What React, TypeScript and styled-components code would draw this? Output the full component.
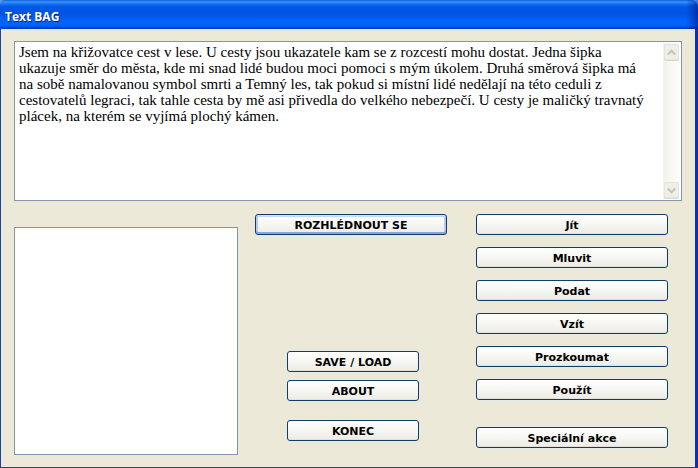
import React from "react";
import styled, { createGlobalStyle } from "styled-components";

const GlobalStyle = createGlobalStyle`
  * { box-sizing: border-box; }
  html, body { margin: 0; padding: 0; background: #ece9d8; }
`;

const Window = styled.div`
  display: flex;
  flex-direction: column;
  min-height: 100vh;
  background: linear-gradient(90deg, #5b93ee, #3a7bea);
`;

const TitleBar = styled.header`
  display: flex;
  align-items: center;
  height: 29px;
  padding: 5px 5px 0;
  border-radius: 5px 7px 0 0;
  background:
    linear-gradient(90deg, transparent calc(100% - 12px), rgba(0, 24, 130, 0.6)),
    linear-gradient(180deg, #0a5fd8 0, #3c94ff 2px, #1470f5 4px, #0058e6 7px, #0054e3 14px, #0062fa 20px, #0066ff 25px, #0050da 27px, #0038b8 29px);
`;

const Title = styled.h1`
  margin: 0;
  color: #fff;
  font: bold 12px/16px "Open Sans", "Noto Sans", sans-serif;
  text-shadow: 1px 1px 0 #0f1f8a;
`;

const Body = styled.main`
  flex: 1;
  display: flex;
  flex-direction: column;
  gap: 13px;
  padding: 12px 13px 12px;
  border: solid #1d4496;
  border-width: 0 3px 1px 1px;
  border-right-color: #0831b4;
  background: #ece9d8;
`;

const StoryFrame = styled.section`
  display: flex;
  height: 160px;
  border: 1px solid #8296a8;
  background: #fff;
`;

const Story = styled.textarea`
  flex: 1;
  min-width: 0;
  margin: 0;
  padding: 2px 0 0 4px;
  border: 0;
  outline: 0;
  resize: none;
  overflow: hidden;
  white-space: pre;
  background: transparent;
  color: #000;
  font: 15px/16px "Liberation Serif", serif;
`;

const ScrollTrack = styled.div`
  display: flex;
  flex-direction: column;
  justify-content: space-between;
  align-items: center;
  width: 17px;
  margin: 1px;
  padding: 1px 0;
  background: linear-gradient(90deg, #f1f1ec, #fdfdfa);
`;

const ScrollButton = styled.button`
  display: flex;
  align-items: center;
  justify-content: center;
  width: 15px;
  height: 16px;
  padding: 0;
  border: 1px solid #e6e5dc;
  border-radius: 2px;
  background: #efeee7;
  box-shadow: 0 1px 0 #d9d9d2;
`;

const Lower = styled.div`
  flex: 1;
  display: flex;
  padding-right: 14px;
`;

const Items = styled.div`
  flex: 7 1 0;
  display: flex;
  margin: 13px 17px 0 0;
`;

const ItemList = styled.select`
  flex: 1;
  width: 100%;
  min-height: 228px;
  margin: 0;
  padding: 0;
  border: 1px solid #8296a8;
  border-radius: 0;
  outline: 0;
  background: #fff;
`;

const Center = styled.div`
  flex: 6 1 0;
  display: flex;
  flex-direction: column;
  justify-content: space-between;
  padding-bottom: 14px;
`;

const SystemMenu = styled.nav`
  display: flex;
  flex-direction: column;
  gap: 8px;
  padding: 0 28px 0 32px;
`;

const Actions = styled.nav`
  flex: 6 1 0;
  display: flex;
  flex-direction: column;
  gap: 12px;
  margin-left: 29px;
`;

const PushButton = styled.button<{ $focused?: boolean; $spaceAbove?: number }>`
  width: 100%;
  height: 21px;
  margin: ${(p) => p.$spaceAbove ?? 0}px 0 0;
  padding: 2px 0 0;
  border: 1px solid #123c66;
  border-radius: 3px;
  outline: 0;
  background: linear-gradient(180deg, #ffffff 0%, #f6f6f2 50%, #ecebe5 100%);
  box-shadow: ${(p) =>
    p.$focused
      ? "inset 0 1px 0 #cee0fb, inset 0 -2px 0 #86a6ea, inset 2px 0 0 #b5cbf5, inset -2px 0 0 #b5cbf5, inset 0 2px 0 #c3dafb"
      : "inset 0 -1px 0 #e2e0d8, 0 0 0 1px rgba(220, 236, 236, 0.6)"};
  color: #000;
  font: bold 11px/17px "DejaVu Sans", Verdana, sans-serif;
`;

const storyText = [
  "Jsem na křižovatce cest v lese. U cesty jsou ukazatele kam se z rozcestí mohu dostat. Jedna šipka",
  "ukazuje směr do města, kde mi snad lidé budou moci pomoci s mým úkolem. Druhá směrová šipka má",
  "na sobě namalovanou symbol smrti a Temný les, tak pokud si místní lidé nedělají na této ceduli z",
  "cestovatelů legraci, tak tahle cesta by mě asi přivedla do velkého nebezpečí. U cesty je maličký travnatý",
  "plácek, na kterém se vyjímá plochý kámen.",
].join("\n");

const actions = ["Jít", "Mluvit", "Podat", "Vzít", "Prozkoumat", "Použít"];

function Chevron({ up }: { up?: boolean }) {
  return (
    <svg width="9" height="7" viewBox="0 0 9 7" fill="none" aria-hidden="true">
      <path d={up ? "M.7 5.5 4.5 1.7 8.3 5.5" : "M.7 1.5 4.5 5.3 8.3 1.5"} stroke="#c5c4bb" strokeWidth="2.2" />
    </svg>
  );
}

export default function App() {
  return (
    <>
      <GlobalStyle />
      <Window>
        <TitleBar>
          <Title>Text BAG</Title>
        </TitleBar>
        <Body>
          <StoryFrame>
            <Story aria-label="Text BAG" readOnly spellCheck={false} value={storyText} />
            <ScrollTrack>
              <ScrollButton type="button" aria-label="Nahoru" disabled>
                <Chevron up />
              </ScrollButton>
              <ScrollButton type="button" aria-label="Dolů" disabled>
                <Chevron />
              </ScrollButton>
            </ScrollTrack>
          </StoryFrame>
          <Lower>
            <Items>
              <ItemList size={12} aria-label="Předměty" />
            </Items>
            <Center>
              <PushButton type="button" $focused>ROZHLÉDNOUT SE</PushButton>
              <SystemMenu>
                <PushButton type="button">SAVE / LOAD</PushButton>
                <PushButton type="button">ABOUT</PushButton>
                <PushButton type="button" $spaceAbove={11}>KONEC</PushButton>
              </SystemMenu>
            </Center>
            <Actions>
              {actions.map((label) => (
                <PushButton key={label} type="button">{label}</PushButton>
              ))}
              <PushButton type="button" $spaceAbove={15}>Speciální akce</PushButton>
            </Actions>
          </Lower>
        </Body>
      </Window>
    </>
  );
}
